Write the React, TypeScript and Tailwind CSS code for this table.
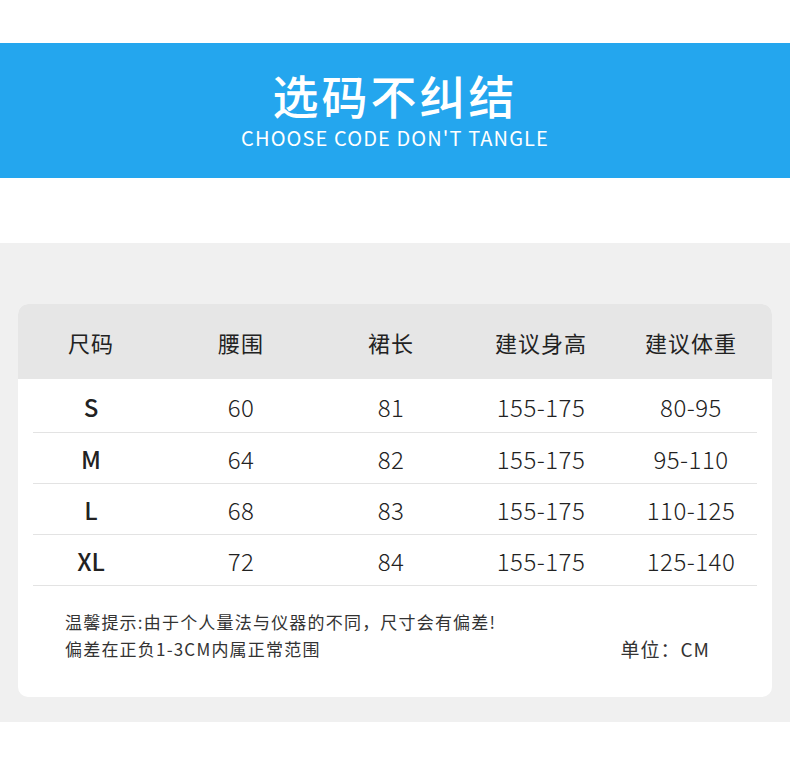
import React from 'react';

const headers = ['尺码', '腰围', '裙长', '建议身高', '建议体重'];

const rows = [
  ['S', '60', '81', '155-175', '80-95'],
  ['M', '64', '82', '155-175', '95-110'],
  ['L', '68', '83', '155-175', '110-125'],
  ['XL', '72', '84', '155-175', '125-140'],
];

const App: React.FC = () => {
  return (
    <div className="w-[790px] min-h-[771px] bg-white font-['Noto_Sans_CJK_SC',sans-serif] text-[#333]">
      <div className="h-[43px]" />

      {/* Banner */}
      <div className="h-[135px] bg-[#24a6ee] flex flex-col items-center text-white">
        <h1 className="mt-[28px] text-[46px] leading-[46px] font-medium tracking-[3px]">选码不纠结</h1>
        <p className="mt-[8px] text-[20px] leading-[26px] tracking-[1.1px]">CHOOSE CODE DON'T TANGLE</p>
      </div>

      <div className="h-[65px]" />

      {/* Size chart */}
      <div className="bg-[#f0f0f0] pt-[61px] pb-[25px] px-[18px]">
        <div className="bg-white rounded-[10px] overflow-hidden">
          <div className="bg-[#e6e6e6] h-[75px] flex items-center">
            <div className="grid grid-cols-[repeat(5,150px)] -ml-[2px] pt-[2px]">
              {headers.map((h) => (
                <div key={h} className="text-center text-[22px] tracking-[1px] text-[#222]">{h}</div>
              ))}
            </div>
          </div>

          <div className="px-[15px]">
            {rows.map((r, i) => (
              <div key={i} className={`${i === 0 ? 'h-[54px]' : 'h-[51px]'} border-b border-[#e3e3e3] flex items-center`}>
                <div className="grid grid-cols-[repeat(5,150px)] -ml-[17px] pt-[2px]">
                  {r.map((c, j) => (
                    <div key={j} className={`text-center text-[24px] leading-[30px] ${j === 0 ? 'font-medium text-[#222]' : 'font-light text-[#222] tracking-[0.5px]'}`}>{c}</div>
                  ))}
                </div>
              </div>
            ))}
          </div>

          <div className="pl-[47px] pr-[62px] pt-[22px] pb-[35px] text-[17px] leading-[27px] tracking-[1.2px] text-[#333]">
            <p>温馨提示:由于个人量法与仪器的不同，尺寸会有偏差!</p>
            <div className="flex justify-between items-center">
              <p>偏差在正负1-3CM内属正常范围</p>
              <p className="text-[19px] tracking-[1px]">单位：CM</p>
            </div>
          </div>
        </div>
      </div>
    </div>
  );
};

export default App;
